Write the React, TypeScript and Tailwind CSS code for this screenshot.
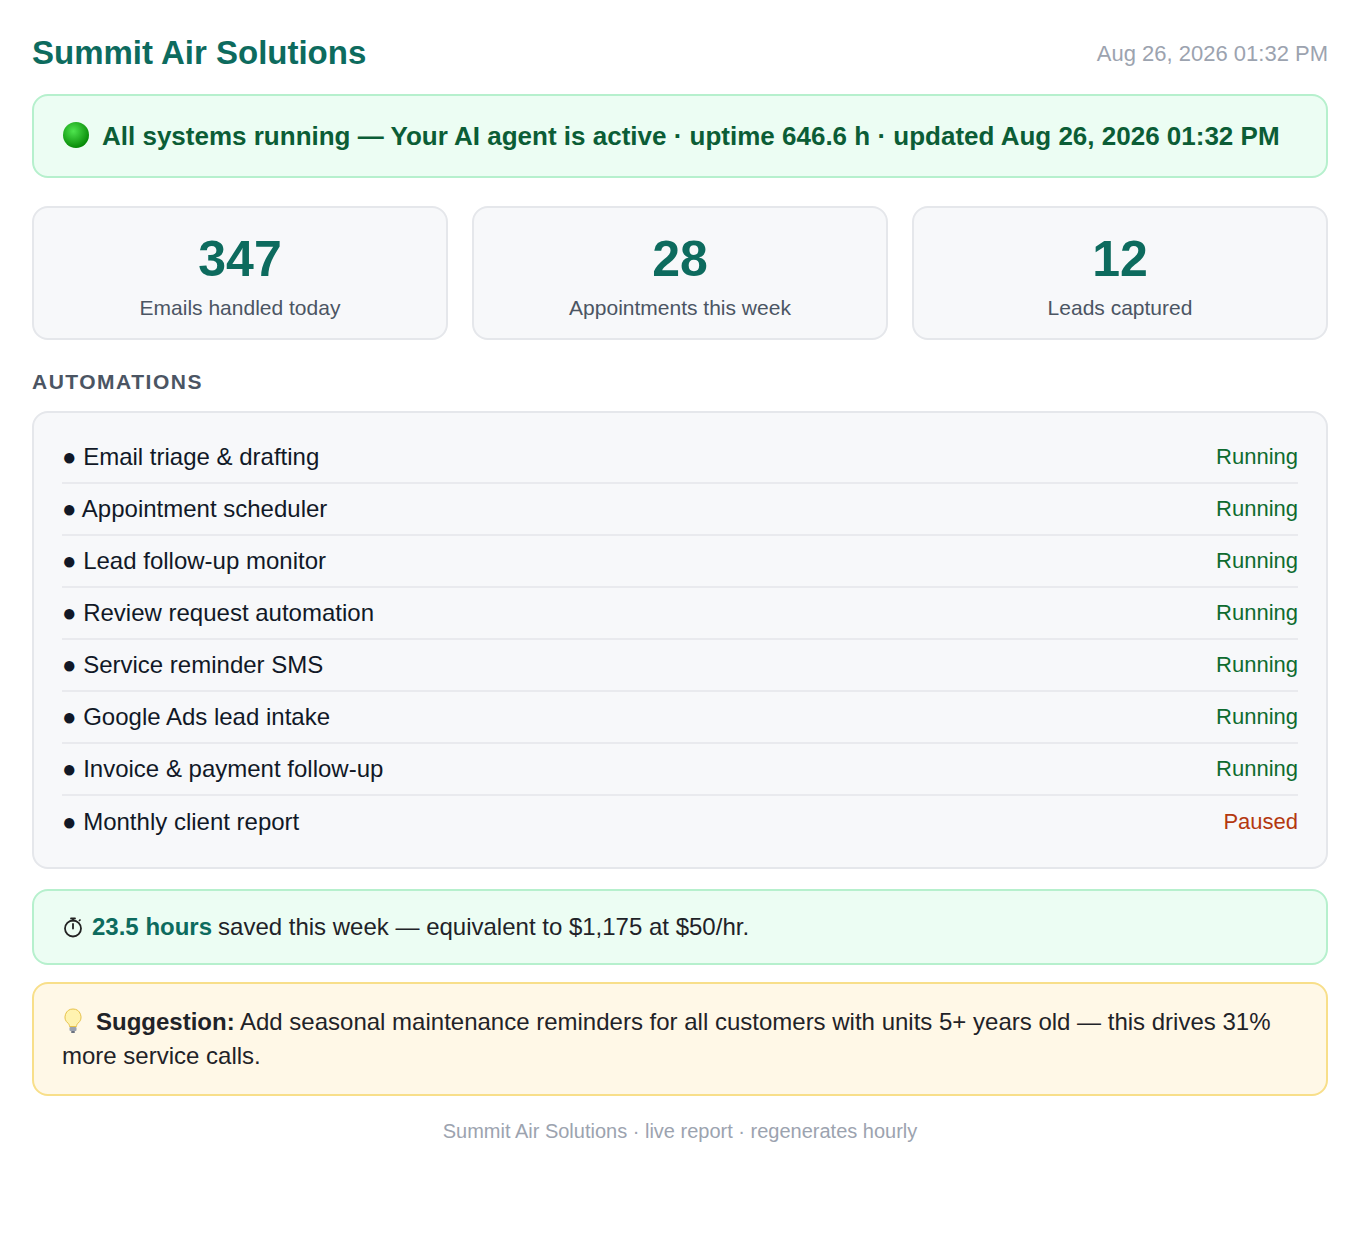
import React from 'react';

const automations: [string, boolean][] = [
  ['Email triage & drafting', true],
  ['Appointment scheduler', true],
  ['Lead follow-up monitor', true],
  ['Review request automation', true],
  ['Service reminder SMS', true],
  ['Google Ads lead intake', true],
  ['Invoice & payment follow-up', true],
  ['Monthly client report', false],
];

const stats = [
  ['347', 'Emails handled today'],
  ['28', 'Appointments this week'],
  ['12', 'Leads captured'],
];

const GreenDot = () => (
  <svg width="28" height="28" viewBox="0 0 28 28" className="inline-block align-[-4px] mr-3">
    <defs>
      <radialGradient id="g" cx="40%" cy="35%" r="65%">
        <stop offset="0" stopColor="#4ee44e" />
        <stop offset="1" stopColor="#078a07" />
      </radialGradient>
    </defs>
    <circle cx="14" cy="14" r="13" fill="url(#g)" />
  </svg>
);

const Bulb = () => (
  <svg width="22" height="26" viewBox="0 0 22 26" className="inline-block align-[-4px] mr-3">
    <path d="M11 1a8 8 0 0 0-5 14.2c1 .9 1.5 2 1.5 3.3h7c0-1.3.5-2.4 1.5-3.3A8 8 0 0 0 11 1z" fill="#fff3b0" stroke="#e7c24a" />
    <rect x="7.5" y="19" width="7" height="4" rx="1" fill="#9ca3af" />
    <rect x="9" y="23" width="4" height="2" rx="1" fill="#6b7280" />
  </svg>
);

const Stopwatch = () => (
  <svg width="22" height="22" viewBox="0 0 22 22" className="inline-block align-[-3px] mr-2">
    <circle cx="11" cy="12.5" r="8" fill="none" stroke="#222" strokeWidth="1.8" />
    <path d="M9 2.5h4M11 2.5v2M11 12.5V8" stroke="#222" strokeWidth="1.8" strokeLinecap="round" />
    <path d="M17 5l1.5-1.5" stroke="#222" strokeWidth="1.6" />
  </svg>
);

export default function App() {
  return (
    <div
      className="w-[1360px] min-h-[1246px] bg-white px-8 pt-[30px] text-[#1f2937]"
      style={{ fontFamily: '"Liberation Sans", Arial, sans-serif' }}
    >
      <div className="flex items-center justify-between h-[46px]">
        <h1 className="text-[33px] font-bold text-[#0d6b5e]">Summit Air Solutions</h1>
        <span className="text-[22px] text-[#9ca3af]">Aug 26, 2026 01:32 PM</span>
      </div>

      <div className="mt-[18px] rounded-2xl border-2 border-[#b6f0cd] bg-[#ecfdf3] px-7 py-[23px] text-[26px] font-bold leading-[34px] text-[#0b5d36]">
        <GreenDot />
        All systems running — Your AI agent is active · uptime 646.6 h · updated Aug 26, 2026 01:32 PM
      </div>

      <div className="mt-7 grid grid-cols-3 gap-6">
        {stats.map(([n, l]) => (
          <div key={l} className="h-[134px] rounded-2xl border-2 border-[#e5e7eb] bg-[#f7f8fa] flex flex-col items-center pt-6">
            <div className="text-[50px] font-bold leading-[54px] text-[#0d6b5e]">{n}</div>
            <div className="mt-[6px] text-[21px] text-[#4b5563]">{l}</div>
          </div>
        ))}
      </div>

      <div className="mt-[26px] text-[21px] font-bold tracking-[1.5px] text-[#4b5563]">AUTOMATIONS</div>

      <div className="mt-[13px] rounded-2xl border-2 border-[#e5e7eb] bg-[#f7f8fa] px-7 py-[19px]">
        {automations.map(([name, running], i) => (
          <div
            key={name}
            className={`flex items-center justify-between h-[52px] text-[24px] ${i < automations.length - 1 ? 'border-b-2 border-[#e9eaee]' : ''}`}
          >
            <span className="text-[#111827]">● {name}</span>
            <span className={`text-[22px] ${running ? 'text-[#0e6b2f]' : 'text-[#b4380f]'}`}>{running ? 'Running' : 'Paused'}</span>
          </div>
        ))}
      </div>

      <div className="mt-5 h-[76px] rounded-2xl border-2 border-[#b6f0cd] bg-[#ecfdf3] px-7 flex items-center text-[24px] text-[#1f2328]">
        <Stopwatch />
        <b className="text-[#0d6b5e] mr-[6px]">23.5 hours</b> saved this week — equivalent to $1,175 at $50/hr.
      </div>

      <div className="mt-[17px] rounded-2xl border-2 border-[#f8df8a] bg-[#fff8e7] px-7 py-[21px] text-[24px] leading-[34px] text-[#1f2328]">
        <Bulb />
        <b>Suggestion:</b> Add seasonal maintenance reminders for all customers with units 5+ years old — this drives 31% more service calls.
      </div>

      <div className="mt-[20px] text-center text-[20px] text-[#9ca3af]">Summit Air Solutions · live report · regenerates hourly</div>
    </div>
  );
}
